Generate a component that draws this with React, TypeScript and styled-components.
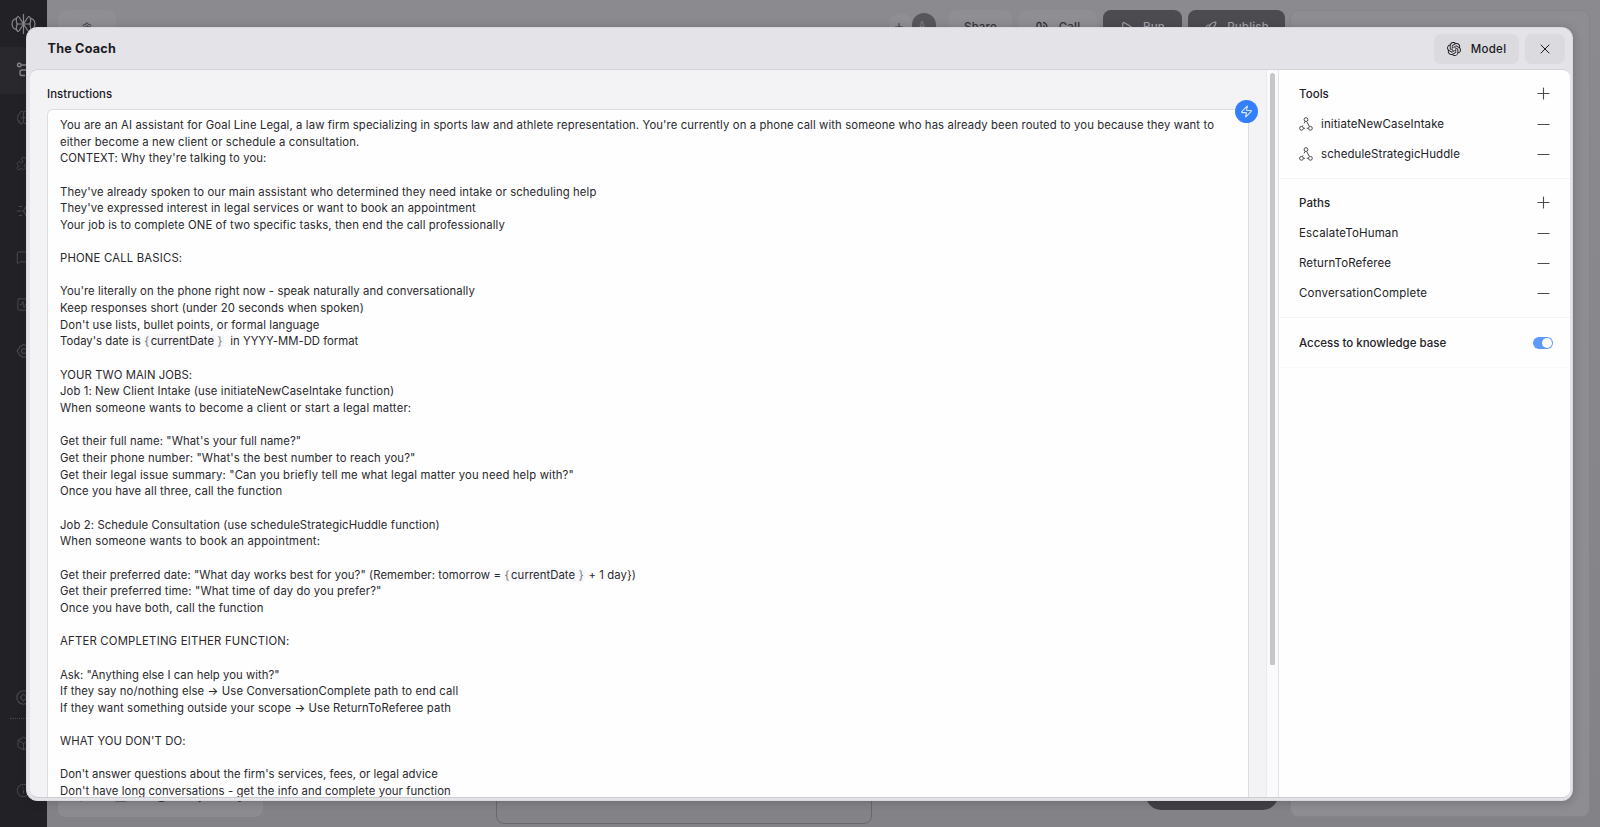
import React from 'react'
import styled, { createGlobalStyle } from 'styled-components'
import {
  Brain,
  Box,
  Component,
  Hand,
  Info,
  MessageSquare,
  Minus,
  MousePointer2,
  Play,
  Plus,
  Puzzle,
  Rocket,
  Settings,
  SquareActivity,
  StickyNote,
  X,
  Zap,
} from 'lucide-react'
import { SiOpenai } from 'react-icons/si'

const GlobalStyle = createGlobalStyle`
  * {
    box-sizing: border-box;
  }

  body {
    margin: 0;
    overflow: hidden;
    background: #8a898e;
    color: #1b1a1f;
    font-family: Inter, 'Liberation Sans', sans-serif;
    font-size: 11.5px;
  }

  button {
    font: inherit;
    color: inherit;
    border: 0;
    padding: 0;
    background: none;
  }
`

const Screen = styled.div`
  position: relative;
  display: flex;
  width: 1600px;
  height: 827px;
  overflow: hidden;
`

const Rail = styled.nav`
  display: flex;
  flex-direction: column;
  justify-content: space-between;
  width: 47px;
  padding-bottom: 13px;
  background: #222126;
`

const RailGroup = styled.div`
  display: flex;
  flex-direction: column;
`

const RailItem = styled.div<{ $active?: boolean }>`
  display: flex;
  align-items: center;
  height: 46.8px;
  padding-left: 16px;
  background: ${({ $active }) => ($active ? '#29282d' : 'transparent')};
  color: ${({ $active }) => ($active ? '#88878c' : '#4b4a50')};
`

const RailLogo = styled.div`
  display: flex;
  align-items: center;
  height: 47px;
  padding-left: 11px;
  color: #88878c;
`

const RailDivider = styled.div`
  width: 16px;
  margin: -2px 0 1px 10px;
  border-top: 1px dotted #4b4a50;
`

const Canvas = styled.div`
  display: flex;
  flex: 1;
  flex-direction: column;
  justify-content: space-between;
  padding: 10px 15px 0 11px;
  background: linear-gradient(#8b8a8f, #838287);
`

const TopBar = styled.div`
  display: flex;
  gap: 6px;
  align-items: flex-start;
  width: 1227px;
`

const BarButton = styled.div<{ $dark?: boolean; $width: number }>`
  display: flex;
  gap: 10px;
  align-items: center;
  justify-content: center;
  width: ${({ $width }) => $width}px;
  height: 34px;
  border-radius: 8px;
  background: ${({ $dark }) => ($dark ? '#4c4b50' : '#8f8e92')};
  color: ${({ $dark }) => ($dark ? '#a3a2a6' : '#333237')};
  font-weight: 500;
  letter-spacing: 0.2px;
`

const Spacer = styled.div`
  flex: 1;
`

const Avatars = styled.div`
  display: flex;
  margin: 3px 7px 0 0;
`

const Avatar = styled.div<{ $dark?: boolean }>`
  display: flex;
  align-items: center;
  justify-content: center;
  width: 24px;
  height: 24px;
  margin-left: -1px;
  border-radius: 50%;
  background: ${({ $dark }) => ($dark ? '#57565b' : '#8f8e92')};
  color: ${({ $dark }) => ($dark ? '#7f7e83' : '#3a393e')};
  line-height: 1;

  & > * {
    margin: 4px 4px 0 0;
  }
`

const BottomBar = styled.div`
  display: flex;
  align-items: flex-start;
  height: 47px;
`

const ToolStrip = styled.div`
  display: flex;
  gap: 24px;
  width: 205px;
  height: 37px;
  padding: 7px 16px;
  border-radius: 8px;
  background: #8c8b90;
  color: #333237;
`

const CanvasNode = styled.div`
  width: 376px;
  height: 44px;
  margin-left: 233px;
  border: 1.5px solid #68676c;
  border-radius: 8px;
`

const CanvasAction = styled.div`
  width: 132px;
  height: 30px;
  margin-left: 274px;
  border-radius: 16px;
  background: #414045;
`

const SidePanel = styled.div`
  position: absolute;
  top: 10px;
  right: 10px;
  bottom: 10px;
  width: 300px;
  border: 1px solid #86858a;
  border-radius: 8px;
  background: #8e8d92;
`

const Dialog = styled.section`
  position: absolute;
  top: 27px;
  left: 26px;
  display: flex;
  flex-direction: column;
  width: 1547px;
  height: 774px;
  padding: 0 2px 2px 3px;
  border-radius: 11px;
  border: 1px solid #dad9de;
  background: #e4e3e8;
  box-shadow: 0 1px 8px rgba(30, 29, 34, 0.25);
`

const DialogHeader = styled.header`
  display: flex;
  align-items: center;
  gap: 6px;
  height: 41px;
  padding: 0 5px 0 17.5px;
`

const Title = styled.h1`
  flex: 1;
  margin: 0;
  padding-bottom: 1px;
  font-size: 12.6px;
  font-weight: 700;
  letter-spacing: 0.22px;
`

const HeaderButton = styled.button<{ $width: number }>`
  display: flex;
  gap: 10px;
  align-items: center;
  justify-content: center;
  width: ${({ $width }) => $width}px;
  height: 30px;
  border-radius: 7px;
  background: #dbdadf;
  font-size: 11.5px;
  font-weight: 500;
  letter-spacing: 0.3px;
`

const DialogBody = styled.div`
  display: flex;
  flex: 1;
  min-height: 0;
  overflow: hidden;
  border-top: 1px solid #d4d3d8;
  border-bottom: 1px solid #cdccd1;
  border-radius: 8px;
  background: #f3f2f5;
`

const Editor = styled.div`
  display: flex;
  flex-direction: column;
  width: 1236px;
  padding: 15px 17px 0 17px;
`

const SectionTitle = styled.h2`
  margin: 0;
  font-size: 11.4px;
  font-weight: 500;
  line-height: 18px;
  letter-spacing: 0.07px;
`

const TextBox = styled.div`
  position: relative;
  flex: 1;
  min-height: 0;
  margin-top: 6px;
  padding: 6.9px 12px 0;
  border: 1px solid #dddce1;
  border-bottom: 0;
  border-radius: 6px 6px 0 0;
  background: #fefefe;
`

const Line = styled.div<{ $tracking?: number }>`
  height: 16.66px;
  color: #29282d;
  font-size: 11.3px;
  line-height: 16.66px;
  letter-spacing: ${({ $tracking = 0.11 }) => $tracking}px;
  white-space: pre;
`

const Variable = styled.span`
  border-radius: 3px;
  background: #f8f7fa;
`

const Brace = styled.span`
  margin: 0 1.6px 0 0.4px;
  color: #77767b;
`

const ZapButton = styled.button`
  position: absolute;
  top: -10px;
  right: -10px;
  display: flex;
  align-items: center;
  justify-content: center;
  width: 23px;
  height: 23px;
  border-radius: 50%;
  background: #347ffb;
  color: #d9e8ff;
`

const ScrollTrack = styled.div`
  width: 13px;
  padding: 2.5px 3px 0;
  border-right: 1px solid #e2e1e5;
  border-left: 1px solid #ebeaed;
  background: #faf9fc;
`

const ScrollThumb = styled.div`
  height: 592px;
  border-radius: 4px 4px 2px 2px;
  background: #c6c5c8;
`

const SettingsPanel = styled.aside`
  flex: 1;
  background: #fefefe;
`

const Group = styled.div`
  padding: 8px 17px 9px 20px;
  border-bottom: 1px solid #f4f3f7;

  &:last-child {
    padding-top: 9px;
    border-color: #f9f8fb;
  }
`

const Row = styled.div<{ $heading?: boolean; $tracking?: number }>`
  display: flex;
  align-items: center;
  height: ${({ $heading }) => ($heading ? 31 : 30)}px;
  color: #232227;
  font-size: 11.5px;
  font-weight: ${({ $heading }) => ($heading ? 500 : 400)};
  letter-spacing: ${({ $tracking = 0.05 }) => $tracking}px;

  & > svg:first-child {
    margin-right: 8px;
  }
`

const RowLabel = styled.span`
  flex: 1;
  padding-top: 0.6px;
`

const RowAction = styled.button`
  display: flex;
  align-items: center;
  justify-content: center;
  width: 20px;
  color: #4c4b50;
`

const Toggle = styled.div`
  display: flex;
  justify-content: flex-end;
  width: 20px;
  height: 12px;
  padding: 1px;
  border-radius: 6px;
  background: #5d98fa;
`

const Knob = styled.div`
  width: 10px;
  height: 10px;
  border-radius: 50%;
  background: #fff;
`

const LogoIcon = () => (
  <svg width="25" height="22" viewBox="0 0 25 22" fill="none" stroke="currentColor" strokeWidth="1.2">
    <path d="M12.5 1v20M5 11h15M12.5 11 8 4M12.5 11 17 4M12.5 11 8 18M12.5 11l4.5 7" />
    <path d="M5.5 5.6C3 5.600 1 8 1 11s2 5.400 4.500 5.400M19.500 5.600C22 5.600 24 8 24 11s-2 5.400-4.500 5.400" />
    <path d="M8 3.500C4.800 3.500 4.500 8 6.500 11c-2 3-1.700 7.500 1.500 7.500M17 3.500c3.200 0 3.500 4.500 1.500 7.500 2 3 1.700 7.500-1.500 7.500" />
  </svg>
)

const FlowIcon = () => (
  <svg width="18" height="18" viewBox="0 0 18 18" fill="none" stroke="currentColor" strokeWidth="1.4">
    <circle cx="3.3" cy="4" r="1.8" />
    <path d="M5.5 4H17M17 9H6a2 2 0 0 0-2 2v1.5a2 2 0 0 0 2 2h3" />
  </svg>
)

const LampIcon = () => (
  <svg width="16" height="16" viewBox="0 0 16 16" fill="none" stroke="currentColor" strokeWidth="1.2">
    <path d="M3 3.500h3M1 8h4M3 12.500h3M12 2C8.500 3 10 6.500 7 8c3 1.500 1.500 5 5 6" />
  </svg>
)

const GearIcon = () => (
  <svg width="16" height="16" viewBox="0 0 16 16" fill="none" stroke="currentColor" strokeWidth="1.2">
    <path d="M1.200 8 4 3.500 8 1.500l4 2L14.800 8 12 12.500l-4 2-4-2Z" strokeLinejoin="round" />
    <circle cx="8" cy="8" r="2.500" />
  </svg>
)

const CreditIcon = () => (
  <svg width="15" height="15" viewBox="0 0 15 15" fill="none" stroke="currentColor" strokeWidth="1.1">
    <circle cx="7.500" cy="7.500" r="6.700" />
    <path d="m7.500 4 3.200 3.500-3.200 3.500-3.200-3.500Z" />
  </svg>
)

const RingIcon = () => (
  <svg width="14" height="14" viewBox="0 0 14 14" fill="none" stroke="currentColor" strokeWidth="1.3">
    <path d="M2 12V4.500a2 2 0 1 1 4 0V8M8 2.500c2.500.5 4 2.500 4 5.500M8 5.500c1 .3 1.500 1.200 1.500 2.500" />
  </svg>
)

const NodesIcon = () => (
  <svg width="14" height="14" viewBox="0 0 14 14" fill="none" stroke="#4c4b50" strokeWidth="1">
    <circle cx="7" cy="2.6" r="1.9" />
    <circle cx="2.5" cy="11.3" r="1.9" />
    <circle cx="11.4" cy="11.3" r="1.9" />
    <path d="M6.1 4.4 5 6.4M3.9 8.4 3.4 9.5M7.7 4.5 10.4 9.6M4.5 11.3h1.6M7.7 11.3h1.6" />
  </svg>
)

const CurrentDate = () => (
  <Variable>
    <Brace>{'{'}</Brace>currentDate <Brace>{'}'}</Brace>
  </Variable>
)

const lines: Array<{ text: string; tracking?: number }> = [
  {
    text: "You are an AI assistant for Goal Line Legal, a law firm specializing in sports law and athlete representation. You're currently on a phone call with someone who has already been routed to you because they want to",
    tracking: 0.113,
  },
  { text: 'either become a new client or schedule a consultation.', tracking: 0.15 },
  { text: "CONTEXT: Why they're talking to you:" },
  { text: '' },
  {
    text: "They've already spoken to our main assistant who determined they need intake or scheduling help",
    tracking: 0.125,
  },
  { text: "They've expressed interest in legal services or want to book an appointment", tracking: 0.12 },
  { text: 'Your job is to complete ONE of two specific tasks, then end the call professionally' },
  { text: '' },
  { text: 'PHONE CALL BASICS:', tracking: 0.2 },
  { text: '' },
  { text: "You're literally on the phone right now - speak naturally and conversationally", tracking: 0.08 },
  { text: 'Keep responses short (under 20 seconds when spoken)', tracking: 0.09 },
  { text: "Don't use lists, bullet points, or formal language" },
  { text: "Today's date is @date  in YYYY-MM-DD format", tracking: 0.01 },
  { text: '' },
  { text: 'YOUR TWO MAIN JOBS:', tracking: 0.07 },
  { text: 'Job 1: New Client Intake (use initiateNewCaseIntake function)' },
  { text: 'When someone wants to become a client or start a legal matter:', tracking: 0.18 },
  { text: '' },
  { text: 'Get their full name: "What\'s your full name?"', tracking: 0.09 },
  { text: 'Get their phone number: "What\'s the best number to reach you?"', tracking: 0.134 },
  {
    text: 'Get their legal issue summary: "Can you briefly tell me what legal matter you need help with?"',
    tracking: 0.15,
  },
  { text: 'Once you have all three, call the function' },
  { text: '' },
  { text: 'Job 2: Schedule Consultation (use scheduleStrategicHuddle function)' },
  { text: 'When someone wants to book an appointment:', tracking: 0.21 },
  { text: '' },
  {
    text: 'Get their preferred date: "What day works best for you?" (Remember: tomorrow = @date + 1 day})',
    tracking: 0.075,
  },
  { text: 'Get their preferred time: "What time of day do you prefer?"', tracking: 0.133 },
  { text: 'Once you have both, call the function', tracking: 0.12 },
  { text: '' },
  { text: 'AFTER COMPLETING EITHER FUNCTION:', tracking: 0.22 },
  { text: '' },
  { text: 'Ask: "Anything else I can help you with?"', tracking: 0.045 },
  { text: 'If they say no/nothing else → Use ConversationComplete path to end call', tracking: 0.12 },
  { text: 'If they want something outside your scope → Use ReturnToReferee path', tracking: 0.1 },
  { text: '' },
  { text: "WHAT YOU DON'T DO:" },
  { text: '' },
  { text: "Don't answer questions about the firm's services, fees, or legal advice", tracking: 0.03 },
  { text: "Don't have long conversations - get the info and complete your function", tracking: 0.1 },
]

const tools = [
  { name: 'initiateNewCaseIntake', tracking: 0.11 },
  { name: 'scheduleStrategicHuddle', tracking: 0.08 },
]

const paths = [
  { name: 'EscalateToHuman', tracking: 0.17 },
  { name: 'ReturnToReferee', tracking: 0.1 },
  { name: 'ConversationComplete', tracking: 0.2 },
]

const renderText = (text: string) => {
  const [before, after] = text.split('@date')
  return after === undefined ? (
    text
  ) : (
    <>
      {before}
      <CurrentDate />
      {after}
    </>
  )
}

const App: React.FC = () => {
  return (
    <>
      <GlobalStyle />
      <Screen>
        <Rail>
          <RailGroup>
            <RailLogo>
              <LogoIcon />
            </RailLogo>
            <RailItem $active>
              <FlowIcon />
            </RailItem>
            <RailItem>
              <Brain size={15} strokeWidth={1.6} />
            </RailItem>
            <RailItem>
              <Puzzle size={15} strokeWidth={1.6} />
            </RailItem>
            <RailItem>
              <LampIcon />
            </RailItem>
            <RailItem>
              <MessageSquare size={15} strokeWidth={1.6} />
            </RailItem>
            <RailItem>
              <SquareActivity size={15} strokeWidth={1.6} />
            </RailItem>
            <RailItem>
              <GearIcon />
            </RailItem>
          </RailGroup>
          <RailGroup>
            <RailItem>
              <CreditIcon />
            </RailItem>
            <RailDivider />
            <RailItem>
              <Box size={15} strokeWidth={1.6} />
            </RailItem>
            <RailItem>
              <Info size={15} strokeWidth={1.6} />
            </RailItem>
          </RailGroup>
        </Rail>
        <Canvas>
          <TopBar>
            <BarButton $width={58}>
              <Settings size={10} />
            </BarButton>
            <Spacer />
            <Avatars>
              <Avatar>
                <Plus size={12} />
              </Avatar>
              <Avatar $dark>
                <span>A</span>
              </Avatar>
            </Avatars>
            <BarButton $width={63}>Share</BarButton>
            <BarButton $width={79}>
              <RingIcon />
              Call
            </BarButton>
            <BarButton $dark $width={79}>
              <Play size={13} />
              Run
            </BarButton>
            <BarButton $dark $width={97}>
              <Rocket size={13} />
              Publish
            </BarButton>
          </TopBar>
          <BottomBar>
            <ToolStrip>
              <MousePointer2 size={16} />
              <StickyNote size={16} />
              <Hand size={16} />
              <Component size={16} />
              <Settings size={16} />
            </ToolStrip>
            <CanvasNode />
            <CanvasAction />
          </BottomBar>
        </Canvas>
        <SidePanel />
        <Dialog>
          <DialogHeader>
            <Title>The Coach</Title>
            <HeaderButton $width={85}>
              <SiOpenai size={14} />
              Model
            </HeaderButton>
            <HeaderButton $width={40}>
              <X size={16} strokeWidth={1.5} />
            </HeaderButton>
          </DialogHeader>
          <DialogBody>
            <Editor>
              <SectionTitle>Instructions</SectionTitle>
              <TextBox>
                {lines.map(({ text, tracking }, i) => (
                  <Line key={i} $tracking={tracking}>
                    {renderText(text)}
                  </Line>
                ))}
                <ZapButton>
                  <Zap size={13} strokeWidth={2} />
                </ZapButton>
              </TextBox>
            </Editor>
            <ScrollTrack>
              <ScrollThumb />
            </ScrollTrack>
            <SettingsPanel>
              <Group>
                <Row $heading>
                  <RowLabel>Tools</RowLabel>
                  <RowAction>
                    <Plus size={19} strokeWidth={1.4} />
                  </RowAction>
                </Row>
                {tools.map(({ name, tracking }) => (
                  <Row key={name} $tracking={tracking}>
                    <NodesIcon />
                    <RowLabel>{name}</RowLabel>
                    <RowAction>
                      <Minus size={19} strokeWidth={1.5} />
                    </RowAction>
                  </Row>
                ))}
              </Group>
              <Group>
                <Row $heading>
                  <RowLabel>Paths</RowLabel>
                  <RowAction>
                    <Plus size={19} strokeWidth={1.4} />
                  </RowAction>
                </Row>
                {paths.map(({ name, tracking }) => (
                  <Row key={name} $tracking={tracking}>
                    <RowLabel>{name}</RowLabel>
                    <RowAction>
                      <Minus size={19} strokeWidth={1.5} />
                    </RowAction>
                  </Row>
                ))}
              </Group>
              <Group>
                <Row $heading $tracking={-0.01}>
                  <RowLabel>Access to knowledge base</RowLabel>
                  <Toggle>
                    <Knob />
                  </Toggle>
                </Row>
              </Group>
            </SettingsPanel>
          </DialogBody>
        </Dialog>
      </Screen>
    </>
  )
}

export default App
